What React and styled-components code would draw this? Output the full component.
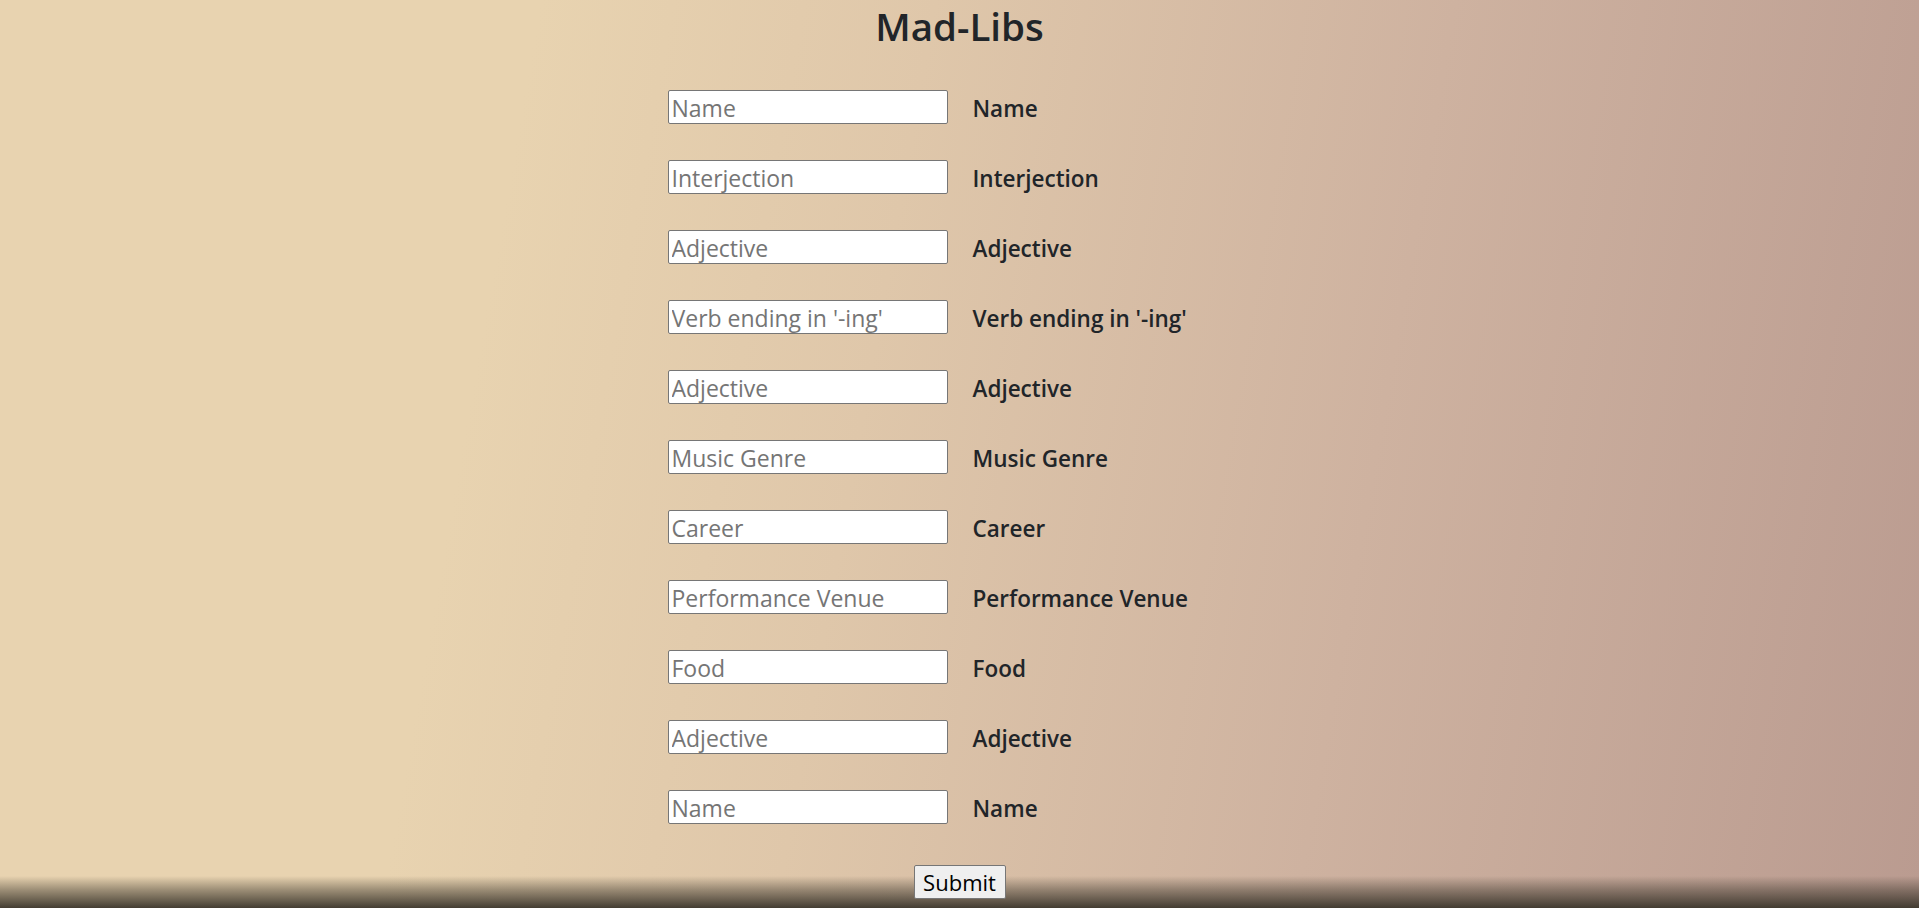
import React from 'react';
import styled, { createGlobalStyle } from 'styled-components';

const GlobalStyle = createGlobalStyle`
  html, body {
    margin: 0;
    padding: 0;
  }
  body {
    font-family: "Open Sans", "Noto Sans", "Liberation Sans", sans-serif;
    color: #212529;
  }
`;

const Page = styled.div`
  box-sizing: border-box;
  height: 100vh;
  overflow: hidden;
  background:
    linear-gradient(
      to bottom,
      rgba(62, 56, 46, 0) calc(100% - 32px),
      rgba(62, 56, 46, 0.45) calc(100% - 18px),
      rgba(62, 56, 46, 0.97) 100%
    ),
    linear-gradient(100deg, #e8d3b0 26%, #dfc7aa 45%, #ceb2a0 70%, #ba9b90 100%);
  display: flex;
  flex-direction: column;
  align-items: center;
`;

const Title = styled.h1`
  margin: 0;
  font-size: 38.5px;
  line-height: 52px;
  font-weight: 600;
  color: #212529;
`;

const Form = styled.form`
  margin-top: 38px;
  width: 584px;
  display: flex;
  flex-direction: column;
  gap: 36px;
`;

const Row = styled.div`
  display: flex;
  align-items: center;
  height: 34px;
`;

const Field = styled.input`
  box-sizing: border-box;
  flex: none;
  width: 280px;
  height: 34px;
  padding: 1px 3px 0;
  border: 1px solid #767676;
  border-radius: 2px;
  background: #fff;
  font-family: "Open Sans", "Noto Sans", sans-serif;
  font-size: 23px;
  color: #212529;
  &::placeholder {
    color: #757575;
  }
`;

const Label = styled.label`
  margin-left: 25px;
  padding-top: 2px;
  font-size: 22.5px;
  font-weight: 600;
  color: #212529;
  white-space: nowrap;
`;

const Submit = styled.button`
  margin-top: 41px;
  box-sizing: border-box;
  width: 92px;
  height: 34px;
  padding: 0 4px;
  border: 1px solid #767676;
  border-radius: 2px;
  background: #efefef;
  font-family: "Open Sans", "Noto Sans", sans-serif;
  font-size: 22px;
  color: #000;
`;

const fields = [
  'Name',
  'Interjection',
  'Adjective',
  "Verb ending in '-ing'",
  'Adjective',
  'Music Genre',
  'Career',
  'Performance Venue',
  'Food',
  'Adjective',
  'Name',
];

export default function App() {
  return (
    <>
      <GlobalStyle />
      <Page>
        <Title>Mad-Libs</Title>
        <Form onSubmit={(e) => e.preventDefault()}>
          {fields.map((f, i) => (
            <Row key={i}>
              <Field id={`word-${i}`} type="text" placeholder={f} />
              <Label htmlFor={`word-${i}`}>{f}</Label>
            </Row>
          ))}
        </Form>
        <Submit type="submit">Submit</Submit>
      </Page>
    </>
  );
}
